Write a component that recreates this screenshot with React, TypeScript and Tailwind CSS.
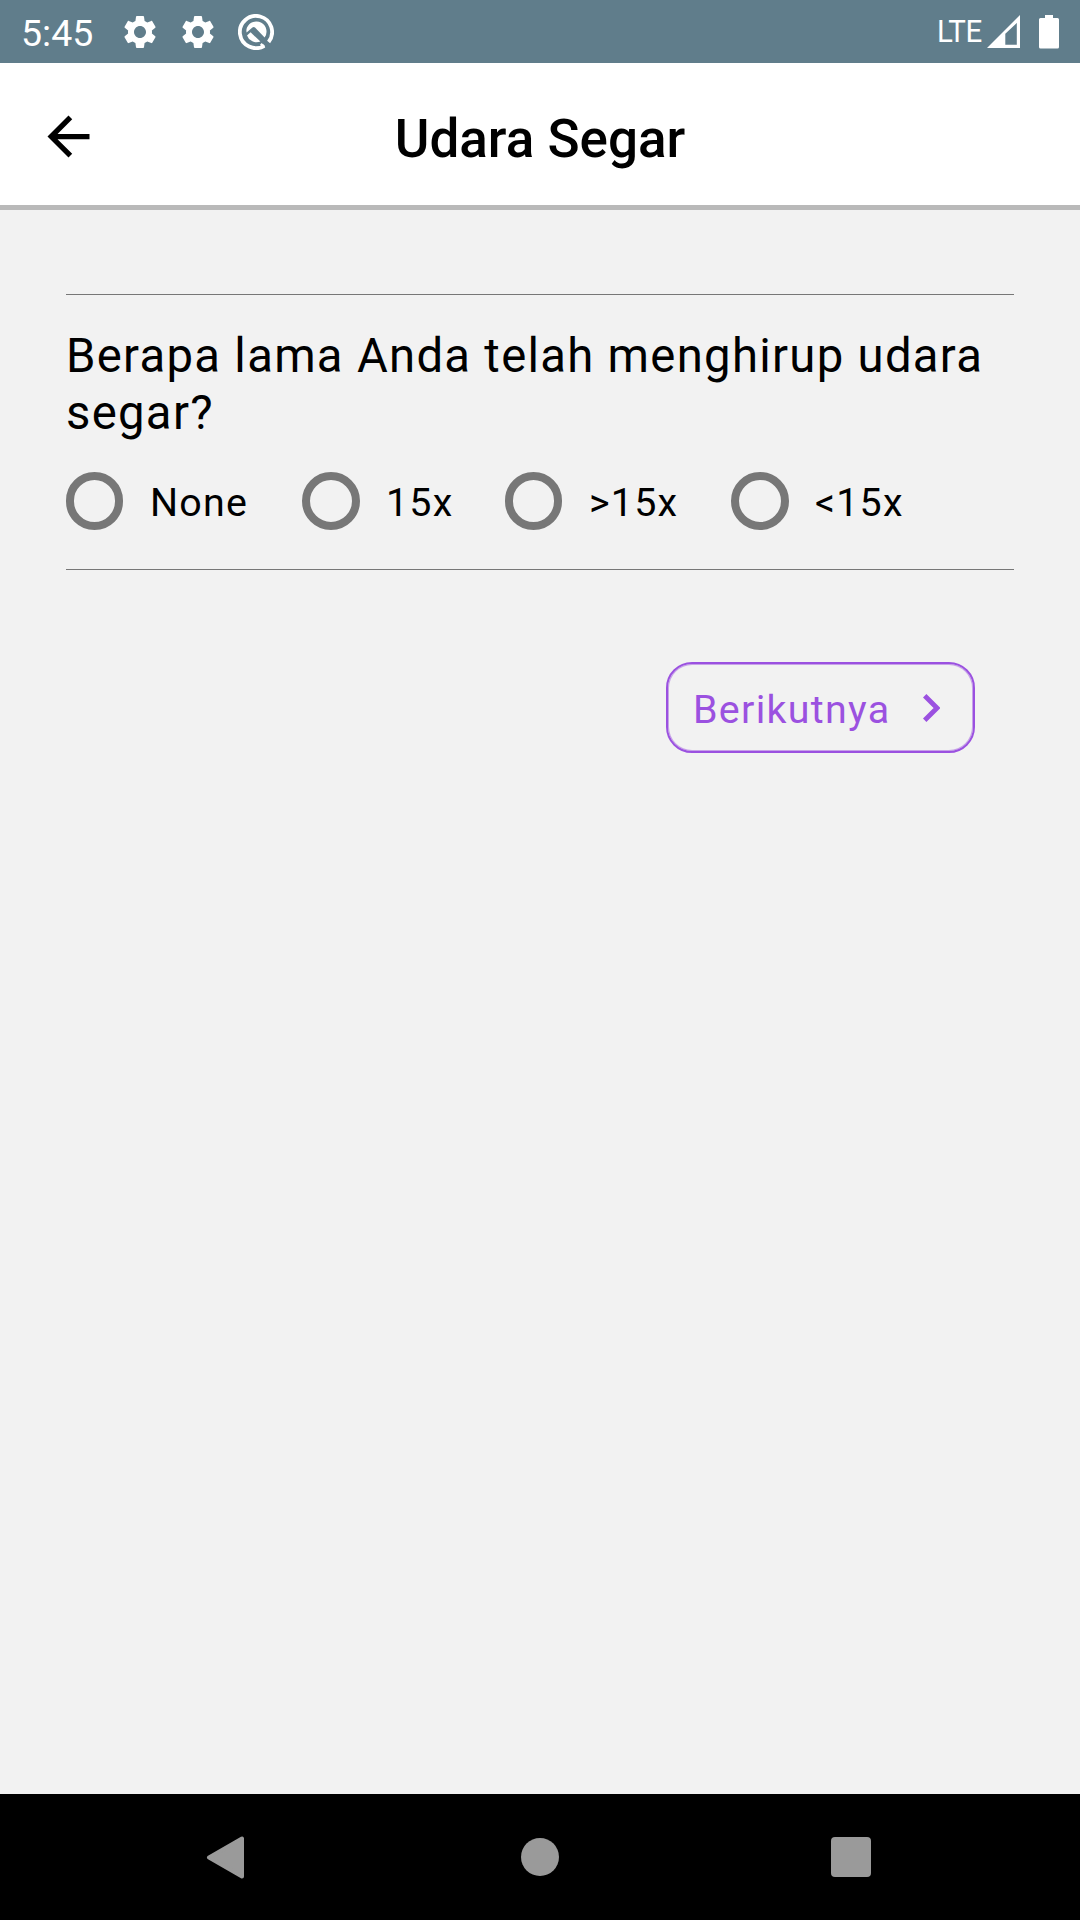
import React from "react";

const options = [
  { label: "None", slot: "w-[236px]", ring: "w-[57px] mr-[27px]" },
  { label: "15x", slot: "w-[203px]", ring: "w-[58px] mr-[26px]" },
  { label: ">15x", slot: "w-[226px]", ring: "w-[57px] mr-[27px]" },
  { label: "<15x", slot: "w-[226px]", ring: "w-[58px] mr-[26px]" },
];

function GearIcon() {
  return (
    <svg viewBox="0 0 24 24" className="h-[40px] w-[40px] shrink-0" fill="#fff">
      <path d="M19.14 12.94c.04-.3.06-.61.06-.94 0-.32-.02-.64-.07-.94l2.03-1.58c.18-.14.23-.41.12-.61l-1.92-3.32c-.12-.22-.37-.29-.59-.22l-2.39.96c-.5-.38-1.03-.7-1.62-.94l-.36-2.54c-.04-.24-.24-.41-.48-.41h-3.84c-.24 0-.43.17-.47.41l-.36 2.54c-.59.24-1.13.57-1.62.94l-2.39-.96c-.22-.08-.47 0-.59.22L2.74 8.87c-.12.21-.08.47.12.61l2.03 1.58c-.05.3-.09.63-.09.94s.02.64.07.94l-2.03 1.58c-.18.14-.23.41-.12.61l1.92 3.32c.12.22.37.29.59.22l2.39-.96c.5.38 1.03.7 1.62.94l.36 2.54c.05.24.24.41.48.41h3.84c.24 0 .44-.17.47-.41l.36-2.54c.59-.24 1.13-.56 1.62-.94l2.39.96c.22.08.47 0 .59-.22l1.92-3.32c.12-.22.07-.47-.12-.61l-2.01-1.58zM12 15.6c-1.98 0-3.6-1.62-3.6-3.6s1.62-3.6 3.6-3.6 3.6 1.62 3.6 3.6-1.62 3.6-3.6 3.6z" />
    </svg>
  );
}

function DebugIcon() {
  return (
    <svg viewBox="0 0 36 36" className="h-[36px] w-[36px] shrink-0" fill="none">
      <path d="M26.3 31.8A16.1 16.1 0 1 1 30.6 28" stroke="#fff" strokeWidth="3.8" />
      <path d="M22.8 29.8L26.3 33" stroke="#fff" strokeWidth="2.4" />
      <path d="M9 13.5A10.2 10.2 0 1 1 26.6 23.6L17 13.6Q15.8 12.6 14.4 13.6L8.6 18.4Q8 16 9 13.5Z" fill="#fff" />
      <path d="M9 21.4L12.6 18.2L22.4 27.6A10.2 10.2 0 0 1 9 21.4Z" fill="#fff" />
    </svg>
  );
}

export default function App() {
  return (
    <div className="flex h-[1920px] w-[1080px] flex-col overflow-hidden bg-[#f2f2f2] font-['Roboto',sans-serif] text-black">
      <header className="flex h-[63px] shrink-0 items-center bg-[#607d8b] text-white">
        <span className="ml-[21px] w-[99px] pt-[3px] text-[37.5px] leading-[43px]">5:45</span>
        <GearIcon />
        <span className="w-[18px]" />
        <GearIcon />
        <span className="w-[20px]" />
        <DebugIcon />
        <span className="ml-auto origin-right scale-x-[0.92] pb-[2px] text-[32px] leading-[38px] tracking-[-0.5px]">LTE</span>
        <svg viewBox="0 0 34 34" className="ml-[5px] h-[34px] w-[34px]">
          <path fillRule="evenodd" fill="#fff" d="M0 33L33 0V33ZM18.3 18.8V29.8H29.8V8Z" />
        </svg>
        <svg viewBox="0 0 20 34" className="mr-[21px] ml-[18px] h-[34px] w-[20px]">
          <path fill="#fff" d="M6 0H14V3H18.5Q20 3 20 4.5V32Q20 33.5 18.5 33.5H1.5Q0 33.5 0 32V4.5Q0 3 1.5 3H6Z" />
        </svg>
      </header>

      <div className="grid h-[147px] shrink-0 grid-cols-[1fr_auto_1fr] items-center border-b-[5px] border-[#b9b9b9] bg-white">
        <svg viewBox="0 0 24 24" className="mt-[5px] ml-[37px] h-[63px] w-[63px]">
          <path d="M20 11H7.83l5.59-5.59L12 4l-8 8 8 8 1.41-1.41L7.83 13H20v-2z" />
        </svg>
        <h1 className="pt-[10px] text-[53px] leading-[62px] font-medium">Udara Segar</h1>
        <span />
      </div>

      <main className="flex grow flex-col px-[66px] pt-[84px]">
        <section className="flex h-[276px] flex-col border-y border-[#777777]">
          <p className="mt-[33px] text-[47.25px] leading-[57px] tracking-[1.3px]">
            Berapa lama Anda telah menghirup udara segar?
          </p>
          <div className="mt-[30px] flex">
            {options.map((o) => (
              <label key={o.label} className={`flex h-[58px] shrink-0 items-center ${o.slot}`}>
                <span className={`h-[58px] shrink-0 rounded-full border-[8px] border-[#777777] ${o.ring}`} />
                <span className="pt-[3px] text-[39.4px] leading-[46px] tracking-[1.2px]">{o.label}</span>
              </label>
            ))}
          </div>
        </section>
        <button className="mt-[92px] mr-[39px] flex h-[91px] w-[309px] items-center self-end rounded-[26px] border-2 border-[#9b51e0] pl-[25px] text-[39.4px] leading-[46px] tracking-[1.3px] text-[#9b51e0] shadow-[inset_0_0_0_1px_rgba(155,81,224,0.5)]">
          <span className="w-[230px] pt-[4px] text-left">Berikutnya</span>
          <svg viewBox="0 0 17 28" className="h-[28px] w-[17px]">
            <path d="M1.7 1.7L14 14L1.7 26.3" fill="none" stroke="#9b51e0" strokeWidth="4.8" />
          </svg>
        </button>
      </main>

      <nav className="flex h-[126px] shrink-0 items-center bg-black">
        <svg viewBox="0 0 38 43" className="ml-[206px] h-[43px] w-[38px]">
          <path fill="#9a9a9a" stroke="#9a9a9a" strokeWidth="4" strokeLinejoin="round" d="M3 21.5L36 2.5V40.5Z" />
        </svg>
        <span className="ml-[277px] h-[38px] w-[38px] rounded-full bg-[#9a9a9a]" />
        <span className="ml-[272px] h-[40px] w-[40px] rounded-[4px] bg-[#9a9a9a]" />
      </nav>
    </div>
  );
}
